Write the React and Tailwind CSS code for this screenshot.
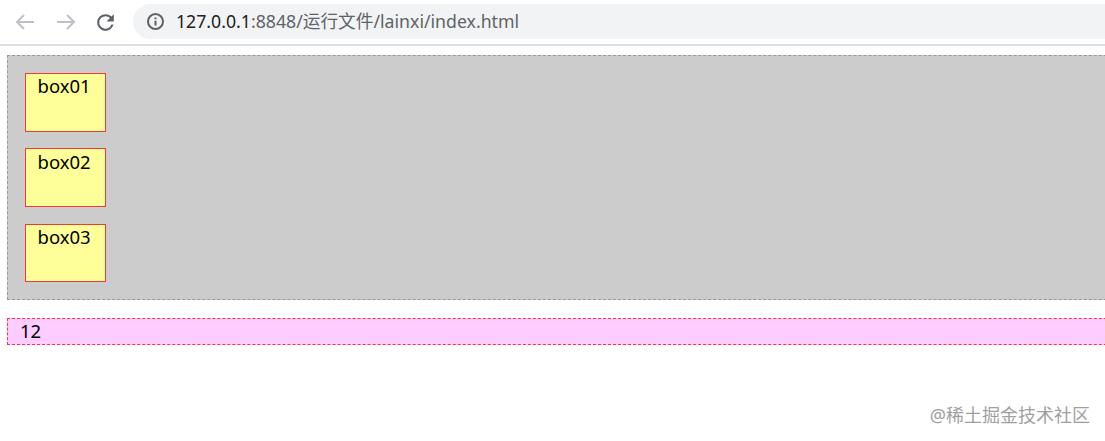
const font = { fontFamily: '"Noto Sans", "Noto Sans CJK SC", sans-serif' };

function Box({ label, className }) {
  return (
    <div className={`w-[81px] border border-[#f03a3a] bg-[#ffff99] pl-[11.5px] text-[18.5px] leading-[24px] text-black ${className}`}>
      {label}
    </div>
  );
}

export default function App() {
  return (
    <div className="relative w-[1105px] h-[441px] overflow-hidden bg-white" style={font}>
      <div className="flex items-center h-[44px]">
        <div className="flex items-center pl-[13px] w-[133px]">
          <svg width="24" height="24" viewBox="0 0 24 24" fill="none" stroke="#bdc1c6" strokeWidth="2"><path d="M21 12H4M11 5l-7 7 7 7" /></svg>
          <svg width="24" height="24" viewBox="0 0 24 24" fill="none" stroke="#bdc1c6" strokeWidth="2" className="ml-[17px]"><path d="M3 12h17M13 5l7 7-7 7" /></svg>
          <svg width="25" height="25" viewBox="0 0 24 24" fill="#5f6368" className="ml-[15px]"><path d="M17.65 6.35A7.96 7.96 0 0 0 12 4a8 8 0 1 0 7.73 10h-2.08A6 6 0 1 1 12 6c1.66 0 3.14.69 4.22 1.78L13 11h7V4l-2.35 2.35z" /></svg>
        </div>
        <div className="flex items-center flex-1 h-[35px] mt-[-1px] rounded-l-full bg-[#f1f3f4] pl-[13px]">
          <svg width="19" height="19" viewBox="0 0 24 24" fill="none" stroke="#5f6368" strokeWidth="2.6" className="shrink-0">
            <circle cx="12" cy="12" r="9.5" />
            <path d="M12 11v6M12 7v2.2" />
          </svg>
          <span className="ml-[11px] text-[17.7px] text-[#5f6368] whitespace-nowrap"><span className="text-[#202124]">127.0.0.1</span>:8848/运行文件/lainxi/index.html</span>
        </div>
      </div>
      <div className="h-[2px] bg-[#dedfe6]" />
      <div className="ml-[7px] mt-[9px] w-[1200px] h-[245px] border border-dashed border-[#999999] bg-[#cccccc] pl-[17px] pt-[17px] flex flex-col">
        <Box label="box01" className="h-[59px]" />
        <Box label="box02" className="h-[59px] mt-[16px] pt-[1px]" />
        <Box label="box03" className="h-[58px] mt-[17px]" />
      </div>
      <div className="ml-[7px] mt-[18px] w-[1200px] h-[27px] border border-dashed border-[#ff3344] bg-[#ffccff] pl-3 text-[18.5px] leading-[24px] text-black">
        12
      </div>
      <div className="absolute right-[15px] top-[402px] text-[18px] leading-[26px] text-[#a0a0a0] whitespace-nowrap">@稀土掘金技术社区</div>
    </div>
  );
}
